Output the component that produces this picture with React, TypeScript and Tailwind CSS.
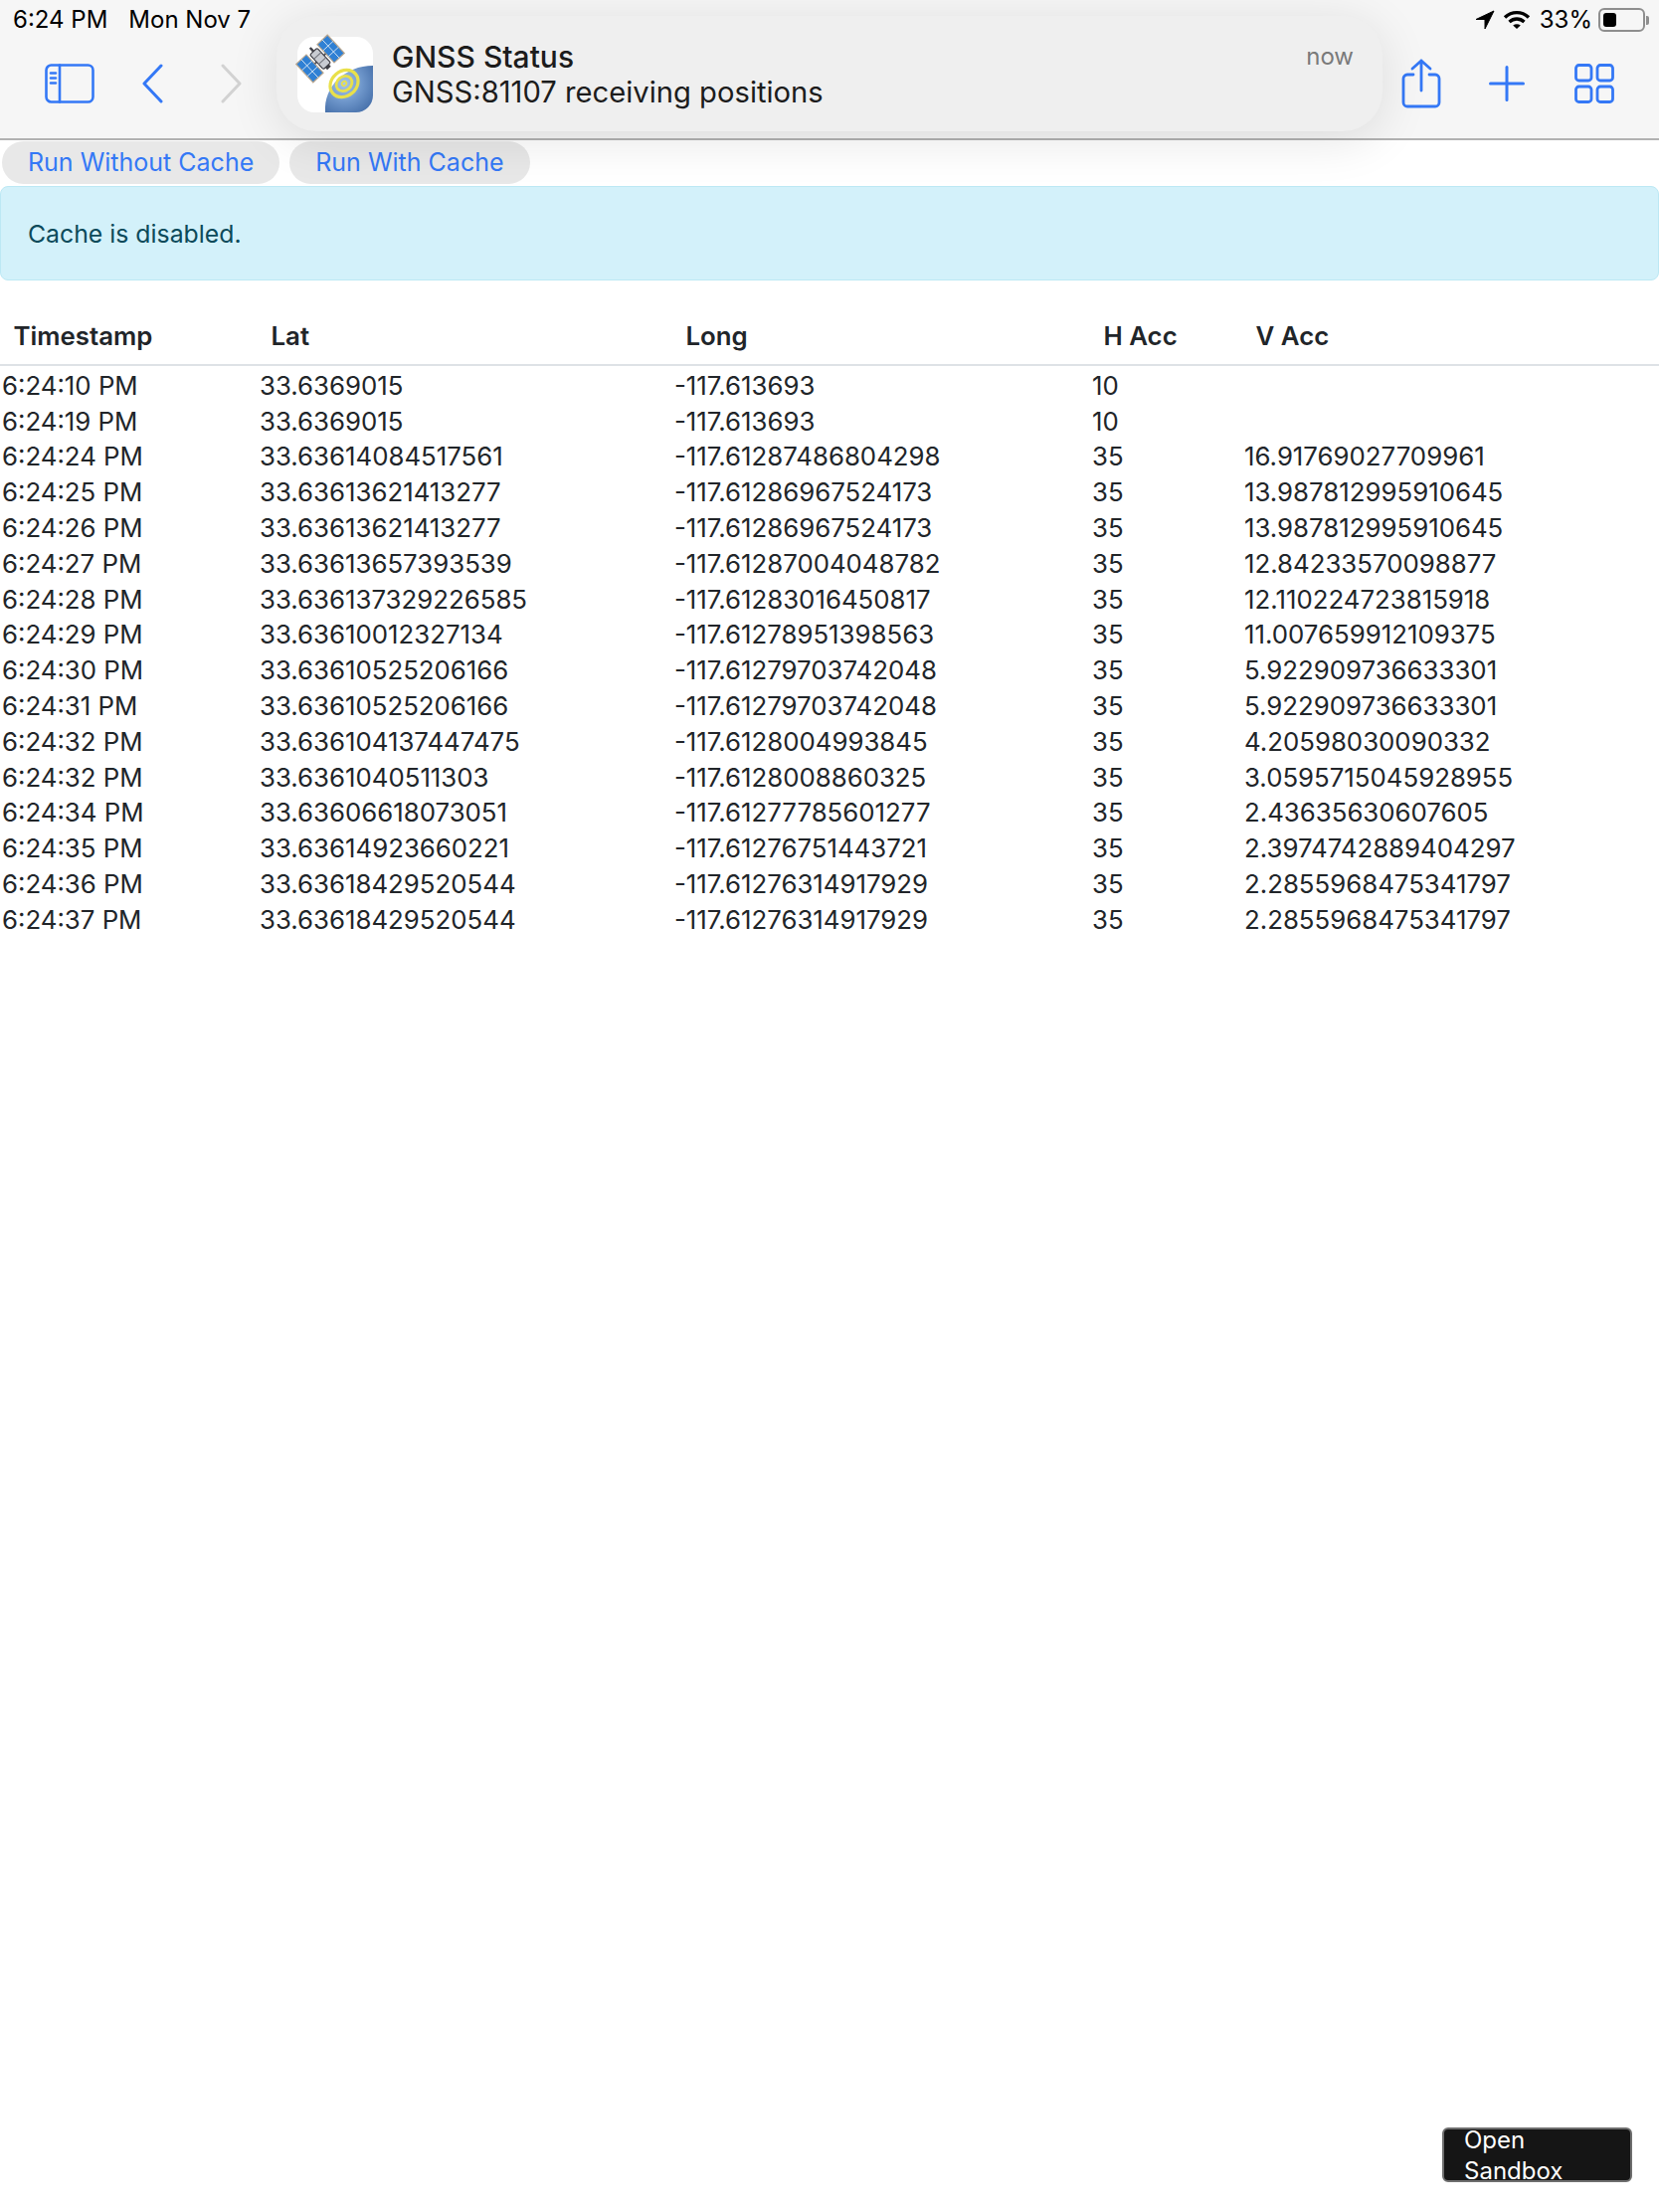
import React from "react";

const rows = [
  ["6:24:10 PM", "33.6369015", "-117.613693", "10", ""],
  ["6:24:19 PM", "33.6369015", "-117.613693", "10", ""],
  ["6:24:24 PM", "33.63614084517561", "-117.61287486804298", "35", "16.91769027709961"],
  ["6:24:25 PM", "33.63613621413277", "-117.61286967524173", "35", "13.987812995910645"],
  ["6:24:26 PM", "33.63613621413277", "-117.61286967524173", "35", "13.987812995910645"],
  ["6:24:27 PM", "33.63613657393539", "-117.61287004048782", "35", "12.84233570098877"],
  ["6:24:28 PM", "33.636137329226585", "-117.61283016450817", "35", "12.110224723815918"],
  ["6:24:29 PM", "33.63610012327134", "-117.61278951398563", "35", "11.007659912109375"],
  ["6:24:30 PM", "33.63610525206166", "-117.61279703742048", "35", "5.922909736633301"],
  ["6:24:31 PM", "33.63610525206166", "-117.61279703742048", "35", "5.922909736633301"],
  ["6:24:32 PM", "33.636104137447475", "-117.6128004993845", "35", "4.20598030090332"],
  ["6:24:32 PM", "33.6361040511303", "-117.6128008860325", "35", "3.0595715045928955"],
  ["6:24:34 PM", "33.63606618073051", "-117.61277785601277", "35", "2.43635630607605"],
  ["6:24:35 PM", "33.63614923660221", "-117.61276751443721", "35", "2.3974742889404297"],
  ["6:24:36 PM", "33.63618429520544", "-117.61276314917929", "35", "2.2855968475341797"],
  ["6:24:37 PM", "33.63618429520544", "-117.61276314917929", "35", "2.2855968475341797"],
];

const headers = ["Timestamp", "Lat", "Long", "H Acc", "V Acc"];

function AppIcon() {
  return (
    <svg width="76" height="76" viewBox="0 0 76 76" className="shrink-0 overflow-visible">
      <defs>
        <clipPath id="tile"><rect width="76" height="76" rx="17" /></clipPath>
        <radialGradient id="globe" gradientUnits="userSpaceOnUse" cx="47" cy="47" r="40">
          <stop offset="0" stopColor="#a9c8ea" />
          <stop offset="0.45" stopColor="#6f97cb" />
          <stop offset="1" stopColor="#3a64a0" />
        </radialGradient>
      </defs>
      <g clipPath="url(#tile)">
        <rect width="76" height="76" fill="#ffffff" />
        <path d="M28 76C26 50 48 29 76 29V76Z" fill="url(#globe)" />
        <ellipse cx="47" cy="47" rx="15" ry="12.500" transform="rotate(-40 47 47)" fill="none" stroke="#e9e04a" strokeWidth="3.200" />
        <ellipse cx="47" cy="47" rx="8.500" ry="7" transform="rotate(-40 47 47)" fill="none" stroke="#e9e04a" strokeWidth="2.800" />
        <ellipse cx="47" cy="47" rx="2.500" ry="2" transform="rotate(-40 47 47)" fill="none" stroke="#e9e04a" strokeWidth="1.600" />
      </g>
      <g transform="translate(23 22) rotate(-43)">
        <g stroke="#b9a68e" strokeWidth="1.200" fill="#2f80d4">
          <rect x="-21.500" y="-12.500" width="14" height="25" />
          <rect x="7.500" y="-12.500" width="14" height="25" />
        </g>
        <path d="M-14.500 -12.500V12.500M-21.500 -4H-7.500M-21.500 4H-7.500M14.500 -12.500V12.500M7.500 -4H21.500M7.500 4H21.500" stroke="#d5e5f5" strokeWidth="0.900" />
        <path d="M-7.500 0H7.500" stroke="#55555c" strokeWidth="2" />
        <rect x="-5" y="-10" width="10" height="20" rx="1.500" fill="#c8cbd2" stroke="#3f3f46" strokeWidth="1.200" />
        <path d="M-5 -4H5M-5 3H5" stroke="#70727a" strokeWidth="1" />
        <path d="M0 -10V-15" stroke="#3f3f46" strokeWidth="2.400" />
        <path d="M-2.500 10h5v3h-5z" fill="#3f3f46" />
      </g>
    </svg>
  );
}

function Toolbar() {
  const blue = "#3478f6";
  return (
    <header className="relative h-[141px] bg-[#f6f6f6] border-b-2 border-[#b2b2b2] text-black">
      <div className="flex justify-between pl-[13px] pr-[10px] pt-[4px] text-[24px] leading-[32px]">
        <div className="flex gap-[21px]">
          <span>6:24 PM</span>
          <span>Mon Nov 7</span>
        </div>
        <div className="flex items-center">
          <svg width="20" height="20" viewBox="0 0 20 20" className="mr-[8px]"><path d="M19 1 1 9.500h9V19z" fill="#000" stroke="#000" strokeLinejoin="round" /></svg>
          <svg width="28" height="20" viewBox="0 0 28 20" fill="none" stroke="#000" strokeWidth="3.400" className="mr-[9px]">
            <path d="M2 7.500c7-6.500 17-6.500 24 0" />
            <path d="M6.500 12c4.500-4 10.500-4 15 0" />
            <path d="M14 19l-3.800-3.400c2.200-1.700 5.400-1.700 7.600 0z" fill="#000" stroke="none" />
          </svg>
          <span className="mr-[6px]">33%</span>
          <div className="flex items-center">
            <div className="w-[47px] h-[24px] rounded-[6px] border-2 border-[#8e8e8e] p-[3px]">
              <div className="w-[13px] h-full rounded-[3px] bg-black" />
            </div>
            <div className="w-[3px] h-[9px] rounded-r-[2px] bg-[#8e8e8e] ml-[1px]" />
          </div>
        </div>
      </div>
      <div className="flex items-center justify-between pl-[45px] pr-[45px] pt-[23px]">
        <div className="flex items-center gap-[47px]">
          <svg width="50" height="40" viewBox="0 0 50 40" fill="none" stroke={blue} strokeWidth="2.600" strokeLinecap="round">
            <rect x="1.500" y="1.500" width="47" height="37" rx="5" />
            <path d="M15 1.500V38.500M6 9.500h5M6 14.500h5M6 19.500h5" />
          </svg>
          <div className="flex gap-[54px]">
            <svg width="24" height="40" viewBox="0 0 24 40" fill="none" stroke={blue} strokeWidth="3" strokeLinecap="round" strokeLinejoin="round"><path d="M20 2 3 20l17 18" /></svg>
            <svg width="24" height="40" viewBox="0 0 24 40" fill="none" stroke="#d2d2d2" strokeWidth="3" strokeLinecap="round" strokeLinejoin="round"><path d="M4 2l17 18L4 38" /></svg>
          </div>
        </div>
        <div className="flex items-center gap-[50px]">
          <svg width="40" height="50" viewBox="0 0 40 50" fill="none" stroke={blue} strokeWidth="2.800" strokeLinecap="round" strokeLinejoin="round" className="translate-x-[2px]">
            <path d="M12 16H6a4 4 0 0 0-4 4v24a4 4 0 0 0 4 4h28a4 4 0 0 0 4-4V20a4 4 0 0 0-4-4h-6" />
            <path d="M20 32V2M11 10l9-8 9 8" />
          </svg>
          <svg width="36" height="36" viewBox="0 0 36 36" fill="none" stroke={blue} strokeWidth="3" strokeLinecap="round"><path d="M18 1.500v33M1.500 18h33" /></svg>
          <svg width="40" height="40" viewBox="0 0 40 40" fill="none" stroke={blue} strokeWidth="2.800">
            <rect x="1.500" y="1.500" width="15.500" height="15.500" rx="3" />
            <rect x="23" y="1.500" width="15.500" height="15.500" rx="3" />
            <rect x="1.500" y="23" width="15.500" height="15.500" rx="3" />
            <rect x="23" y="23" width="15.500" height="15.500" rx="3" />
          </svg>
        </div>
      </div>
      {/* notification banner */}
      <div className="absolute left-[278px] top-[16px] w-[1112px] h-[116px] rounded-[40px] bg-[#efefef] shadow-[0_8px_50px_rgba(0,0,0,0.11)] flex items-start pl-[21px] pr-[29px] pt-[21px]">
        <AppIcon />
        <div className="ml-[19px] mt-[2px] flex-1 text-[#1c1c1c]">
          <div className="text-[30px] leading-[36px] font-medium">GNSS Status</div>
          <div className="text-[29.200px] leading-[36px]">GNSS:81107 receiving positions</div>
        </div>
        <div className="mt-[4px] text-[24px] leading-[32px] text-[#7a7a7a]">now</div>
      </div>
    </header>
  );
}

export default function App() {
  return (
    <div className="relative min-h-[2224px] bg-white font-['Inter',sans-serif] text-[#212529]">
      <Toolbar />
      <div className="flex gap-[10px] px-[2px] pt-[1px]">
        <button className="h-[43px] px-[26px] rounded-full bg-[#e8e8e8] text-[#3478f6] text-[25px] leading-[43px]">Run Without Cache</button>
        <button className="h-[43px] px-[26px] rounded-full bg-[#e8e8e8] text-[#3478f6] text-[25px] leading-[43px]">Run With Cache</button>
      </div>
      <div className="mt-[2px] h-[95px] rounded-[8px] border border-[#bce8f4] bg-[#d3f1fa] pl-[27px] pt-[3px] flex items-center text-[24.800px] text-[#0c4a5a]">
        Cache is disabled.
      </div>
      <table className="mt-[38px] w-full table-fixed text-[25.800px] leading-[35.800px]">
        <colgroup>
          <col className="w-[259px]" />
          <col className="w-[417px]" />
          <col className="w-[420px]" />
          <col className="w-[153px]" />
          <col />
        </colgroup>
        <thead>
          <tr className="border-b-2 border-[#dee2e6]">
            {headers.map((h) => (
              <th key={h} className="pl-[13.500px] pb-[10px] text-left font-semibold">{h}</th>
            ))}
          </tr>
        </thead>
        <tbody>
          {rows.map((row, i) => (
            <tr key={i}>
              {row.map((cell, j) => (
                <td key={j} className={i === 0 ? "pl-[2px] pt-[2px] whitespace-nowrap" : "pl-[2px] whitespace-nowrap"}>{cell}</td>
              ))}
            </tr>
          ))}
        </tbody>
      </table>
      <button className="absolute left-[1450px] top-[2139px] w-[191px] h-[55px] overflow-hidden rounded-[6px] border-2 border-[#6e6e6e] bg-[#151515] pl-[20px] text-left text-[24px] leading-[31px] text-white">
        <span className="block -mt-[5px]">Open Sandbox</span>
      </button>
    </div>
  );
}
